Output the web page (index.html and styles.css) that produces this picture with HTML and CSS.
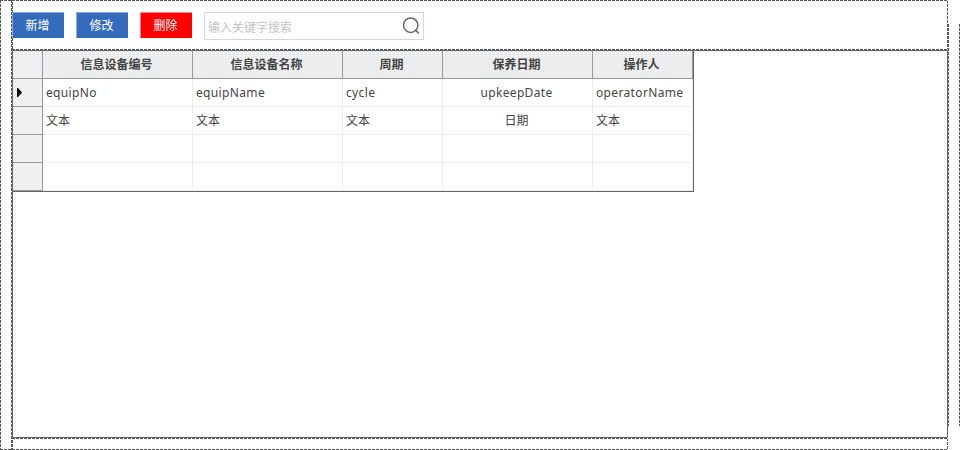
FILE: index.html
```html
<!DOCTYPE html>
<html lang="zh">
<head>
<meta charset="utf-8">
<title>设备保养</title>
<link rel="stylesheet" href="styles.css">
</head>
<body>
<div class="page">
  <aside class="left"></aside>
  <main class="main">
    <header class="toolbar">
      <button class="btn">新增</button>
      <button class="btn">修改</button>
      <button class="btn danger">删除</button>
      <div class="search"><span>输入关键字搜索</span>
        <svg width="18" height="18" viewBox="0 0 18 18" fill="none" stroke="#666" stroke-width="1.5"><circle cx="8.7" cy="8.2" r="7.2"/><path d="M13.2 12.8l3.6 3.6"/></svg>
      </div>
    </header>
    <section class="content">
      <div class="grid">
        <div class="c h"></div><div class="c h">信息设备编号</div><div class="c h">信息设备名称</div><div class="c h">周期</div><div class="c h">保养日期</div><div class="c h">操作人</div>
        <div class="c r"><svg width="5" height="9" viewBox="0 0 5 9"><path d="M0 0h1l4 4.5L1 9H0z"/></svg></div><div class="c en">equipNo</div><div class="c en">equipName</div><div class="c en">cycle</div><div class="c en mid">upkeepDate</div><div class="c en">operatorName</div>
        <div class="c r"></div><div class="c">文本</div><div class="c">文本</div><div class="c">文本</div><div class="c mid">日期</div><div class="c">文本</div>
        <div class="c r"></div><div class="c"></div><div class="c"></div><div class="c"></div><div class="c"></div><div class="c"></div>
        <div class="c r"></div><div class="c"></div><div class="c"></div><div class="c"></div><div class="c"></div><div class="c"></div>
      </div>
    </section>
    <footer class="bottom"></footer>
  </main>
  <aside class="right"></aside>
</div>
</body>
</html>
```
FILE: styles.css
```css
* { box-sizing: border-box; }
:root {
  --dash-x: repeating-linear-gradient(90deg, #555 0 3px, #fff 3px 4px);
  --dash-y: repeating-linear-gradient(180deg, #555 0 3px, #fff 3px 4px);
  --dash-y2: repeating-linear-gradient(180deg, #555 0 1px, #fff 1px 2px, #555 2px 4px);
}
body { margin: 0; background: #fff; color: #444; font: 12px/16px "Noto Sans CJK SC", sans-serif; overflow: hidden; }
.page { display: grid; grid-template-columns: 12px 936px 12px; height: 450px; }
.left {
  background: var(--dash-y) 0 0 / 1px 100% no-repeat, var(--dash-y) 11px 0 / 1px 100% no-repeat,
    var(--dash-x) 0 0 / 100% 1px no-repeat, var(--dash-x) 0 100% / 100% 1px no-repeat;
}
.main { display: grid; grid-template-rows: 50px 388px 12px; }
.toolbar {
  display: flex; align-items: flex-start; gap: 12px; padding-top: 12px;
  background: var(--dash-x) 0 0 / 100% 1px no-repeat, var(--dash-x) 0 49px / 100% 1px no-repeat,
    var(--dash-y2) 0 0 / 1px 100% no-repeat, var(--dash-y) 100% 0 / 1px 100% no-repeat;
}
.btn {
  width: 52px; height: 26px; padding: 0 2px 1px 0; border: 0 solid #8cabdc; border-width: 1px 0 0 1px;
  background: #346bbd; color: #fff; font: inherit;
}
.danger { background: #f00; border-color: #ff8080; }
.search {
  display: flex; align-items: center; justify-content: space-between; width: 220px; height: 28px;
  padding: 0 3px; border: 1px solid #d4d4ea; color: #c4c4c4;
}
.search span { position: relative; top: 1px; }
.content { border: 1px solid #666; }
.grid {
  display: grid; grid-template-columns: 30px 150px 150px 100px 150px 100px; grid-auto-rows: 28px;
  width: 681px; height: 141px; border: solid #666; border-width: 0 1px 1px 0;
}
.c { display: flex; align-items: center; padding: 0 0 1px 3px; border: 0 solid #eee; border-width: 0 1px 1px 0; }
.c.h { justify-content: center; padding: 0 2px 1px 0; background: #ebedef; border-color: #999; font-weight: 700; }
.c.h:first-child { background: #f0f0f0; }
.c.r { padding: 0 0 0 4px; background: #f0f0f0; border-color: #999; }
.c.mid { justify-content: center; padding: 0 2px 1px 0; }
.c.en { padding-bottom: 0; font-family: "Noto Sans", sans-serif; letter-spacing: .35px; }
.bottom {
  background: var(--dash-x) 0 0 / 100% 1px no-repeat, var(--dash-x) 0 100% / 100% 1px no-repeat,
    var(--dash-y2) 0 0 / 1px 100% no-repeat, var(--dash-y) 100% 0 / 1px 100% no-repeat;
}
.right {
  margin: 24px 0;
  background: var(--dash-y) 0 0 / 1px 100% no-repeat, var(--dash-y) 11px 0 / 1px 100% no-repeat;
}
```
